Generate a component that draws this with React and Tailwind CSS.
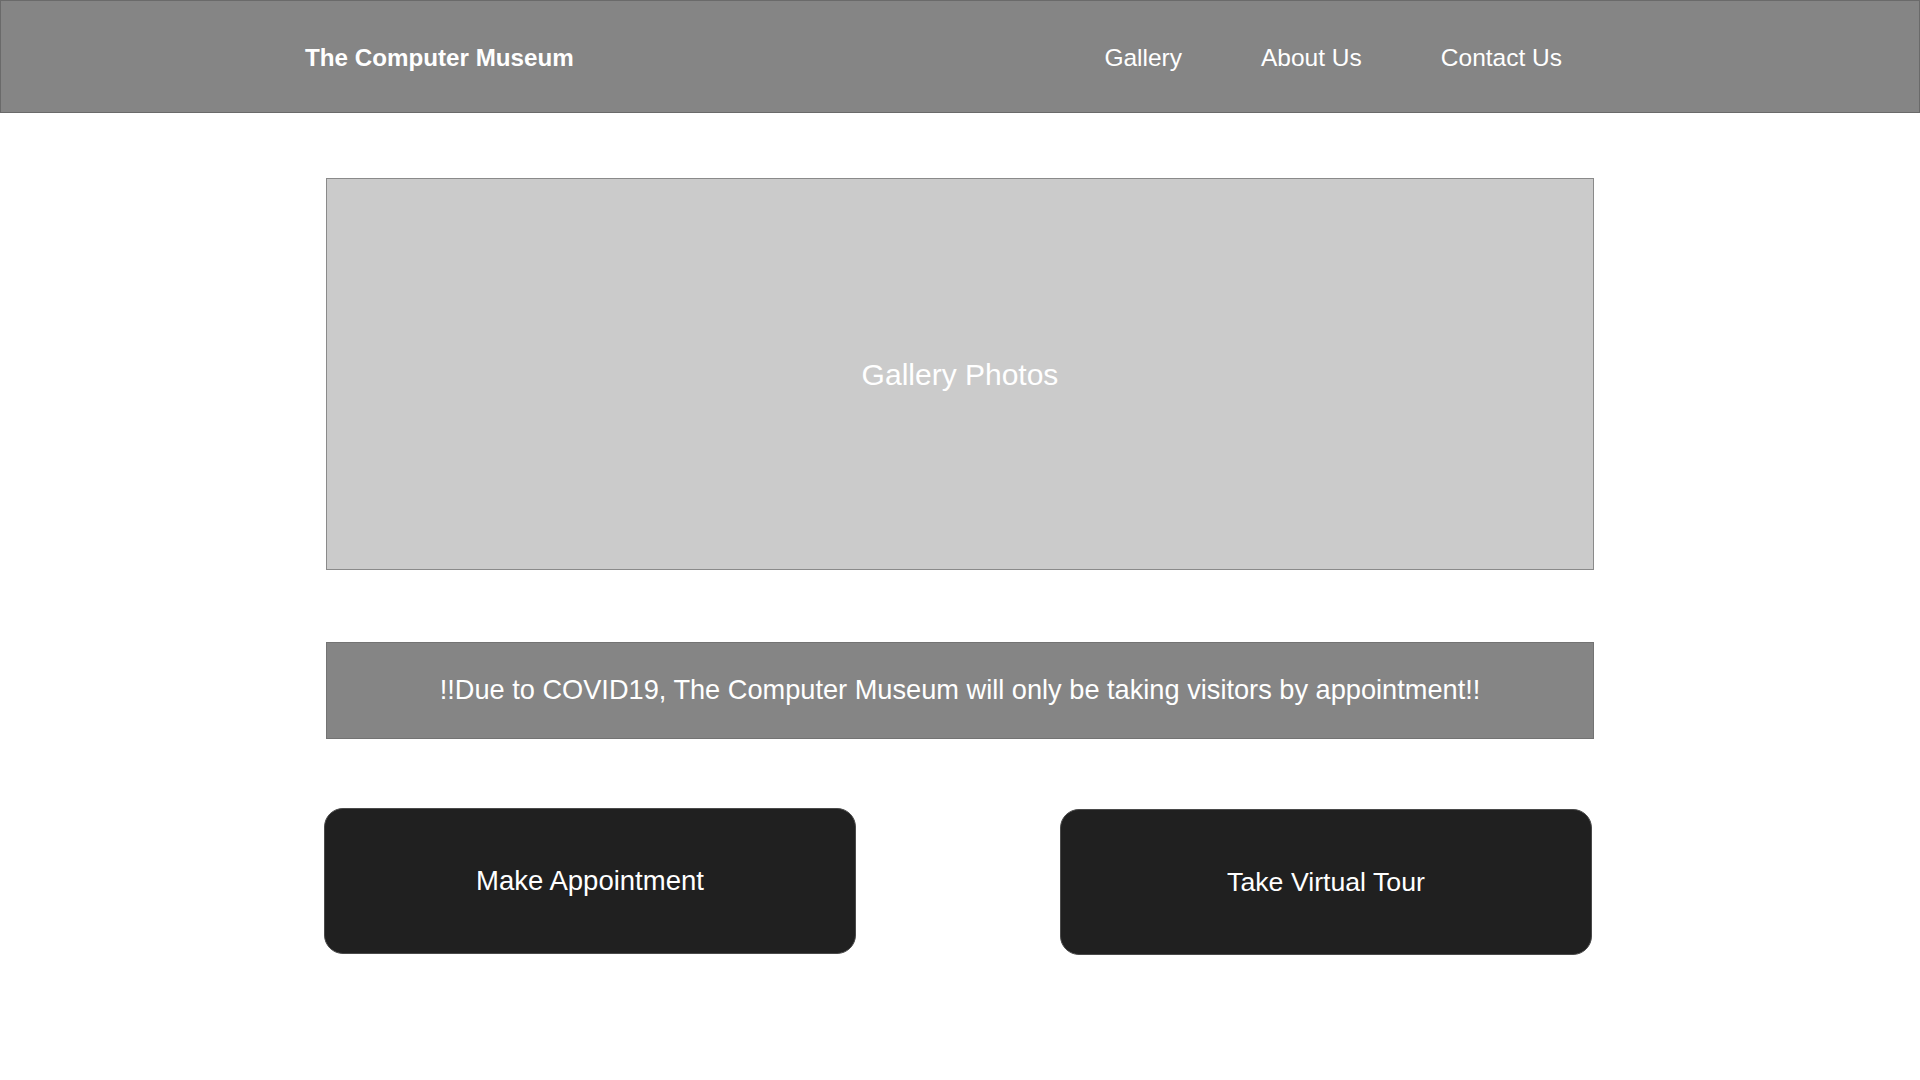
export default function App() {
  const nav = ["Gallery", "About Us", "Contact Us"];
  return <div className="min-h-[1080px] bg-white font-['Liberation_Sans',Arial,sans-serif] text-white">
    <header className="h-[113px] bg-[#858585] border border-[#6a6a6a] flex items-center justify-between pl-[304px] pr-[357px] pt-[4px]">
      <span className="text-[24.2px] font-bold">The Computer Museum</span>
      <nav className="flex items-center gap-[79px] text-[24.5px]">
        {nav.map((n) => <a key={n} href="#">{n}</a>)}
      </nav>
    </header>

    <main className="ml-[326px] w-[1268px] pt-[65px]">
      <div className="h-[392px] bg-[#cbcbcb] border border-[#8a8a8a] flex items-center justify-center">
        <span className="text-[30px]">Gallery Photos</span>
      </div>

      <div className="mt-[72px] h-[97px] bg-[#858585] border border-[#737373] flex items-center justify-center">
        <p className="text-[27.2px]">!!Due to COVID19, The Computer Museum will only be taking visitors by appointment!!</p>
      </div>

      <div className="mt-[69px] -ml-[2px] flex justify-between">
        <button className="w-[532px] h-[146px] rounded-[19px] bg-[#202020] border border-[#4a4a4a] text-[27.5px]">Make Appointment</button>
        <button className="w-[532px] h-[146px] mt-[1px] mr-[2px] rounded-[19px] bg-[#202020] border border-[#4a4a4a] text-[26.7px]">Take Virtual Tour</button>
      </div>
    </main>
  </div>;
}
